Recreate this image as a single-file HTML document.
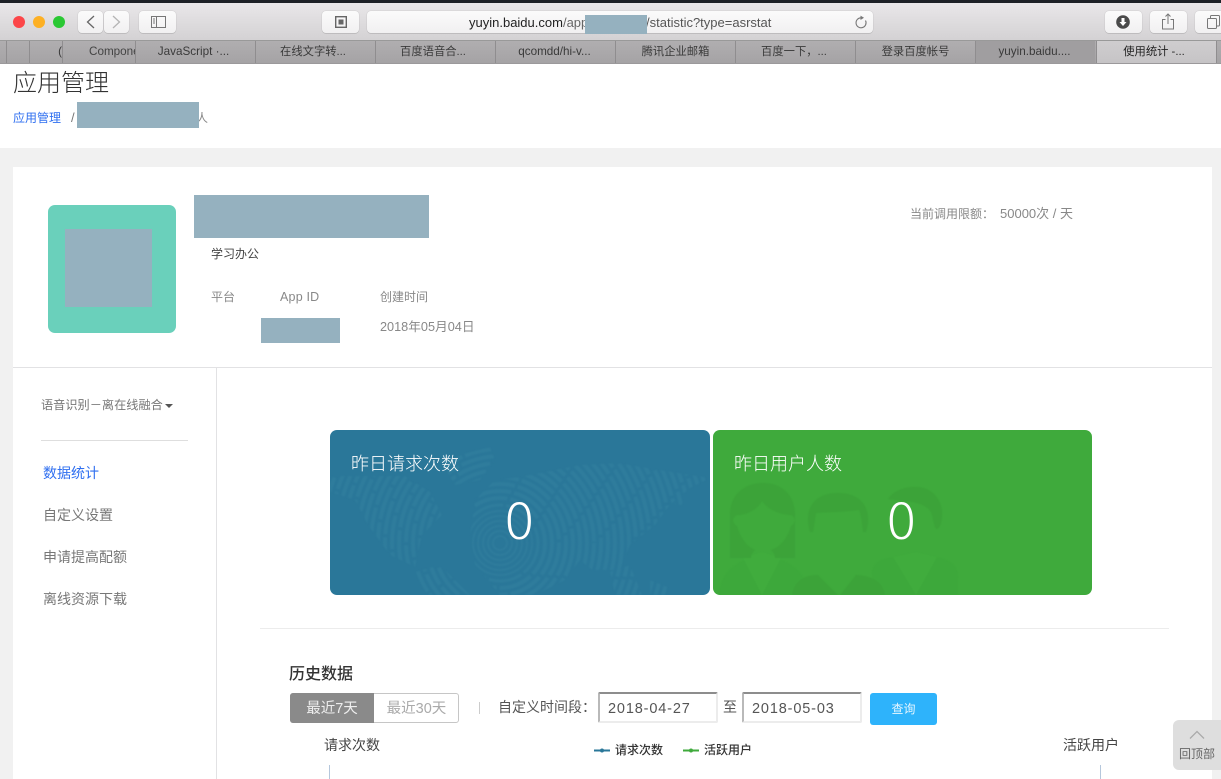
<!DOCTYPE html>
<html lang="zh">
<head>
<meta charset="utf-8">
<style>
html,body{margin:0;padding:0;background:#fff}
body{width:1221px;height:779px;overflow:hidden;position:relative;font-family:"Liberation Sans","Noto Sans CJK SC",sans-serif;color:#333}
.a{position:absolute;white-space:nowrap}
.cjk{font-family:"Noto Sans CJK SC","Liberation Sans",sans-serif}
.btn{position:absolute;top:11px;height:22px;background:linear-gradient(#fbfbfb,#f1f0f1);border-radius:4px;box-shadow:0 0 1px rgba(0,0,0,.28),0 1px 0 rgba(0,0,0,.08)}
.tab{position:absolute;top:41px;height:22px;width:120px;text-align:center;font-size:11.700px;line-height:22px;color:#3a3a3a;border-left:1px solid #8f8d8f;box-sizing:border-box;overflow:hidden;font-family:"Liberation Sans","Noto Sans CJK SC",sans-serif}
.tab.c{font-size:11.300px}
.red{position:absolute;background:#95b1bf}
.t{color:#888;font-size:12.500px}
svg{position:absolute;display:block}
</style>
</head>
<body>
<!-- browser chrome -->
<div class="a" style="left:0;top:0;width:1221px;height:3px;background:#1d2126"></div>
<div class="a" style="left:0;top:3px;width:1221px;height:38px;background:linear-gradient(#e9e7e9,#d3d1d3)"></div>
<div class="a" style="left:13px;top:16px;width:12px;height:12px;border-radius:50%;background:#fc4649"></div>
<div class="a" style="left:33px;top:16px;width:12px;height:12px;border-radius:50%;background:#fdb024"></div>
<div class="a" style="left:53px;top:16px;width:12px;height:12px;border-radius:50%;background:#2ac833"></div>
<div class="btn" style="left:78px;width:25px"></div>
<div class="btn" style="left:104px;width:25px"></div>
<svg style="left:78px;top:11px" width="51" height="22" fill="none" stroke-width="1.300"><path d="M16 5l-6.500 6 6.500 6" stroke="#666"/><path d="M35 5l6.500 6-6.500 6" stroke="#b4b4b4"/></svg>
<div class="btn" style="left:139px;width:37px"></div>
<svg style="left:151px;top:16px" width="15" height="12" fill="none" stroke="#777"><rect x=".5" y=".5" width="14" height="11"/><path d="M5.500 .5v11M2 3h2M2 5h2M2 7h2"/></svg>
<div class="btn" style="left:322px;width:37px"></div>
<svg style="left:335px;top:16px" width="12" height="12"><rect x=".7" y=".7" width="10.600" height="10.600" fill="none" stroke="#666" stroke-width="1.400"/><rect x="3.500" y="3.500" width="5" height="5" fill="#666"/></svg>
<div class="btn" style="left:367px;width:506px"></div>
<div class="a" style="left:469px;top:15px;font-size:13px;line-height:16px;color:#222">yuyin.baidu.com<span style="color:#666">/app</span></div>
<div class="a" style="left:646px;top:15px;font-size:13px;line-height:16px;color:#555">/statistic?type=asrstat</div>
<div class="red" style="left:585px;top:15px;width:62px;height:19px"></div>
<svg style="left:854px;top:15px" width="14" height="15" fill="none" stroke="#777" stroke-width="1.100"><path d="M7.500 2.800A5 5 0 1 0 11.500 5.500"/><path d="M6.500 .6l3.500 2.200-3.500 2.200z" fill="#777" stroke="none"/></svg>
<div class="btn" style="left:1105px;width:37px"></div>
<svg style="left:1116px;top:15px" width="14" height="14"><circle cx="7" cy="7" r="6.800" fill="#4a4a4a"/><path d="M5.500 3h3v4h2L7 11 3.500 7h2z" fill="#fff"/></svg>
<div class="btn" style="left:1150px;width:37px"></div>
<svg style="left:1161px;top:13px" width="14" height="17" fill="none" stroke="#777"><path d="M4.500 6.500H1.500v9.500h11V6.500H9.500M7 11V1M4.500 3.500L7 1l2.500 2.500"/></svg>
<div class="btn" style="left:1195px;width:37px"></div>
<svg style="left:1207px;top:15px" width="14" height="14" fill="none" stroke="#777"><rect x=".5" y="3.500" width="9" height="10" rx="1"/><path d="M3.500 3V1.500a1 1 0 0 1 1-1h7a1 1 0 0 1 1 1V10a1 1 0 0 1-1 1H10"/></svg>

<!-- tab bar -->
<div class="a" style="left:0;top:40px;width:1221px;height:24px;background:linear-gradient(#b0aeb0,#a5a3a5);border-top:1px solid #999;border-bottom:1px solid #9b999b;box-sizing:border-box"></div>
<div class="tab" style="left:6px;width:23px"></div>
<div class="tab" style="left:29px;width:33px;text-align:right">&nbsp;(</div>
<div class="tab" style="left:62px;width:73px;text-align:left;padding-left:26px;color:#444">Compone</div>
<div class="tab" style="left:135px;padding-right:4px">JavaScript ·...</div>
<div class="tab c" style="left:255px;padding-right:5px">在线文字转...</div>
<div class="tab c" style="left:375px;padding-right:5px">百度语音合...</div>
<div class="tab" style="left:495px;padding-right:2px">qcomdd/hi-v...</div>
<div class="tab c" style="left:615px">腾讯企业邮箱</div>
<div class="tab c" style="left:735px;padding-right:3px">百度一下，...</div>
<div class="tab c" style="left:855px">登录百度帐号</div>
<div class="tab" style="left:975px;background:#a09ea0;padding-right:2px">yuyin.baidu....</div>
<div class="tab c" style="left:1096px;background:linear-gradient(#cfcdcf,#c6c4c6);color:#222;padding-right:5px">使用统计 -...</div>
<div class="tab" style="left:1216px;width:5px"></div>

<!-- page head -->
<div class="a cjk" style="left:13px;top:63px;font-size:24px;line-height:35px;color:#333;font-weight:300">应用管理</div>
<div class="a cjk" style="left:13px;top:109px;font-size:12px;line-height:18px;color:#2f6ff0">应用管理</div>
<div class="a" style="left:71px;top:110px;font-size:13px;line-height:16px;color:#777">/</div>
<div class="a cjk" style="left:196px;top:109px;font-size:12px;line-height:18px;color:#888">人</div>
<div class="red" style="left:77px;top:102px;width:122px;height:26px"></div>

<!-- background + card -->
<div class="a" style="left:0;top:148px;width:1221px;height:631px;background:#f1f1f1"></div>
<div class="a" style="left:13px;top:167px;width:1199px;height:612px;background:#fff"></div>
<div class="a" style="left:13px;top:367px;width:1199px;height:1px;background:#e2e2e4"></div>
<div class="a" style="left:216px;top:368px;width:1px;height:411px;background:#e2e2e4"></div>

<!-- app info -->
<div class="a" style="left:48px;top:205px;width:128px;height:128px;border-radius:7px;background:#6ad0bb"></div>
<div class="red" style="left:65px;top:229px;width:87px;height:78px"></div>
<div class="red" style="left:194px;top:195px;width:235px;height:43px"></div>
<div class="a cjk" style="left:211px;top:245px;font-size:12px;line-height:18px;color:#444">学习办公</div>
<div class="a cjk t" style="left:211px;top:288px;font-size:12px;line-height:18px">平台</div>
<div class="a t" style="left:280px;top:288px;line-height:18px;letter-spacing:.2px">App ID</div>
<div class="a cjk t" style="left:380px;top:288px;font-size:12px;line-height:18px">创建时间</div>
<div class="red" style="left:261px;top:318px;width:79px;height:25px"></div>
<div class="a t" style="left:380px;top:318px;font-size:12.700px;line-height:18px;font-family:'Liberation Sans','Noto Sans CJK SC',sans-serif">2018年05月04日</div>
<div class="a t" style="left:910px;top:205px;font-size:12px;line-height:18px;font-family:'Liberation Sans','Noto Sans CJK SC',sans-serif">当前调用限额：</div>
<div class="a t" style="left:1000px;top:205px;font-size:13px;line-height:18px;font-family:'Liberation Sans','Noto Sans CJK SC',sans-serif">50000次 / 天</div>

<!-- sidebar -->
<div class="a cjk" style="left:41px;top:395px;font-size:12.200px;line-height:18px;color:#777">语音识别－离在线融合</div>
<div class="a" style="left:165px;top:404px;width:0;height:0;border-left:4px solid transparent;border-right:4px solid transparent;border-top:4px solid #555"></div>
<div class="a" style="left:41px;top:440px;width:147px;height:1px;background:#dedede"></div>
<div class="a cjk" style="left:43px;top:463px;font-size:14px;line-height:20px;color:#2f6ff0">数据统计</div>
<div class="a cjk" style="left:43px;top:505px;font-size:14px;line-height:20px;color:#777">自定义设置</div>
<div class="a cjk" style="left:43px;top:547px;font-size:14px;line-height:20px;color:#777">申请提高配额</div>
<div class="a cjk" style="left:43px;top:589px;font-size:14px;line-height:20px;color:#777">离线资源下载</div>

<!-- blue card -->
<div class="a" style="left:330px;top:430px;width:380px;height:165px;border-radius:7px;background:#2a7799;overflow:hidden">
<svg style="left:0;top:0;filter:blur(.7px)" width="380" height="165" fill="none" stroke="#2f7c9c" stroke-width="4">
<defs><clipPath id="m">
<path d="M0 46L75 46 100 62 112 85 92 105 85 137 60 125 38 95 25 70 0 62Z"/>
<path d="M110 30L160 17 165 30 150 50 125 55Z"/>
<path d="M85 142L110 135 140 165 95 165Z"/>
<path d="M165 50L190 47 250 35 287 33 330 40 380 48 360 58 340 75 325 95 300 115 290 140 262 140 250 130 235 150 205 165 170 165 145 135 140 105 145 70Z"/>
<path d="M280 142L300 135 312 165 285 165Z"/>
<path d="M320 150L340 158 335 165 320 165Z"/>
<path d="M345 62L354 60 352 75 345 75Z"/>
</clipPath></defs>
<g clip-path="url(#m)" stroke-dasharray="34 3">
<circle cx="170" cy="113" r="7" stroke-width="2" stroke-dasharray="none"/><circle cx="170" cy="113" r="12" stroke-width="2" stroke-dasharray="none"/><circle cx="170" cy="113" r="17" stroke-width="2" stroke-dasharray="none"/><circle cx="170" cy="113" r="22" stroke-width="2" stroke-dasharray="none"/><circle cx="170" cy="113" r="27" stroke-width="2" stroke-dasharray="none"/><circle cx="170" cy="113" r="32" stroke-width="2" stroke-dasharray="none"/><circle cx="170" cy="113" r="38" stroke-width="3"/><circle cx="170" cy="113" r="45"/><circle cx="170" cy="113" r="52"/><circle cx="170" cy="113" r="59"/><circle cx="170" cy="113" r="66"/><circle cx="170" cy="113" r="73"/><circle cx="170" cy="113" r="80"/><circle cx="170" cy="113" r="87"/><circle cx="170" cy="113" r="94"/><circle cx="170" cy="113" r="101"/><circle cx="170" cy="113" r="108"/><circle cx="170" cy="113" r="115"/><circle cx="170" cy="113" r="122"/><circle cx="170" cy="113" r="129"/><circle cx="170" cy="113" r="136"/><circle cx="170" cy="113" r="143"/><circle cx="170" cy="113" r="150"/><circle cx="170" cy="113" r="157"/><circle cx="170" cy="113" r="164"/><circle cx="170" cy="113" r="171"/><circle cx="170" cy="113" r="178"/><circle cx="170" cy="113" r="185"/><circle cx="170" cy="113" r="192"/><circle cx="170" cy="113" r="199"/><circle cx="170" cy="113" r="206"/><circle cx="170" cy="113" r="213"/>
</g></svg>
<div class="a cjk" style="left:21px;top:20px;font-size:18px;line-height:26px;color:#fff;font-weight:300">昨日请求次数</div>
<div class="a cjk" style="left:0;width:378px;text-align:center;top:55px;font-size:50px;line-height:66px;color:#fff;font-weight:300"><span style="display:inline-block;transform:scaleX(1.080)">0</span></div>
</div>

<!-- green card -->
<div class="a" style="left:713px;top:430px;width:379px;height:165px;border-radius:7px;background:#3faa3c;overflow:hidden">
<svg style="left:0;top:0;filter:blur(.6px)" width="379" height="165">
<g fill="#3da83b">
<path d="M6 165C8 145 18 134 38 128L49 125 62 128C84 134 94 148 96 165Z"/>
<path d="M159 165V145C159 132 170 127 186 127L203 124 222 127C238 129 245 136 245 148V165Z"/>
</g>
<g fill="#40ac3d">
<path d="M30 128L49 165 68 128 49 122Z"/>
<path d="M180 127L203 165 224 127 203 122Z"/>
</g>
<g fill="#3ca339">
<path d="M17 128V85C17 64 32 53 50 53S82 64 82 85V128H62C62 124 60 122 58 120 70 116 76 104 78 96 82 94 84 88 78 85 68 85 55 80 49 71 44 80 34 85 24 85 18 88 20 94 24 96 26 104 32 116 42 120 40 122 38 124 38 128Z"/>
<path d="M97 102C90 78 102 63 125 63S160 78 153 102H150C149 92 148 84 146 80 132 82 118 82 103 83 102 90 101 96 100 102Z"/>
<path d="M175 69C181 60 194 56 205 57 219 58 230 70 229 85 229 92 227 98 224 99 221 99 221 90 218 82 214 76 208 74 200 72 190 71 182 70 175 69Z"/>
<path d="M79 165C81 152 90 145 105 145L125 165ZM127 165L143 145C160 146 170 152 172 165Z"/>
</g>
</svg>
<div class="a cjk" style="left:21px;top:20px;font-size:18px;line-height:26px;color:#fff;font-weight:300">昨日用户人数</div>
<div class="a cjk" style="left:0;width:377px;text-align:center;top:55px;font-size:50px;line-height:66px;color:#fff;font-weight:300"><span style="display:inline-block;transform:scaleX(1.080)">0</span></div>
</div>

<div class="a" style="left:260px;top:628px;width:909px;height:1px;background:#ececec"></div>

<!-- history -->
<div class="a cjk" style="left:289px;top:661px;font-size:16px;line-height:23px;color:#333;font-weight:500">历史数据</div>
<div class="a" style="left:290px;top:693px;width:169px;height:30px;box-sizing:border-box;border:1px solid #c6c6c6;border-radius:3px"></div>
<div class="a" style="left:290px;top:693px;width:84px;height:30px;background:#8a8a8a;border-radius:3px 0 0 3px;color:#eee;font-size:14.500px;line-height:32px;text-align:center">最近7天</div>
<div class="a" style="left:374px;top:693px;width:85px;height:30px;color:#aaa;font-size:14.500px;line-height:32px;text-align:center">最近30天</div>
<div class="a" style="left:479px;top:702px;width:1px;height:12px;background:#ccc"></div>
<div class="a cjk" style="left:498px;top:697px;font-size:14px;line-height:21px;color:#555">自定义时间段：</div>
<div class="a" style="left:598px;top:692px;width:120px;height:31px;box-sizing:border-box;border:2px solid #ececec;border-top-color:#8d8d8d;border-left-color:#b9b9b9;border-radius:2px;font-size:14.500px;line-height:30px;padding-left:8px;letter-spacing:.85px;color:#555">2018-04-27</div>
<div class="a cjk" style="left:723px;top:697px;font-size:14px;line-height:21px;color:#555">至</div>
<div class="a" style="left:742px;top:692px;width:120px;height:31px;box-sizing:border-box;border:2px solid #ececec;border-top-color:#8d8d8d;border-left-color:#b9b9b9;border-radius:2px;font-size:14.500px;line-height:30px;padding-left:8px;letter-spacing:.85px;color:#555">2018-05-03</div>
<div class="a cjk" style="left:870px;top:693px;width:67px;height:32px;border-radius:3px;background:#2eb3fb;color:#e6f6ff;font-size:12px;line-height:31px;text-align:center">查询</div>

<div class="a cjk" style="left:324px;top:735px;font-size:14px;line-height:20px;color:#444">请求次数</div>
<div class="a cjk" style="left:1063px;top:735px;font-size:14px;line-height:20px;color:#444">活跃用户</div>
<svg style="left:594px;top:746px" width="16" height="9"><path d="M0 4.500h16" stroke="#2a7799" stroke-width="2"/><circle cx="8" cy="4.500" r="2" fill="#2a7799"/></svg>
<div class="a cjk" style="left:615px;top:741px;font-size:12px;line-height:18px;color:#333;font-weight:500">请求次数</div>
<svg style="left:683px;top:746px" width="16" height="9"><path d="M0 4.500h16" stroke="#3faa3c" stroke-width="2"/><circle cx="8" cy="4.500" r="2" fill="#3faa3c"/></svg>
<div class="a cjk" style="left:704px;top:741px;font-size:12px;line-height:18px;color:#333;font-weight:500">活跃用户</div>
<div class="a" style="left:329px;top:765px;width:1px;height:14px;background:#b5c7dc"></div>
<div class="a" style="left:1100px;top:765px;width:1px;height:14px;background:#b5c7dc"></div>

<!-- back to top -->
<div class="a" style="left:1173px;top:720px;width:48px;height:50px;border-radius:6px 0 0 6px;background:#dedede"></div>
<svg style="left:1189px;top:730px" width="16" height="10" fill="none" stroke="#aaa" stroke-width="1.300"><path d="M1 8.500L8 1.500l7 7"/></svg>
<div class="a cjk" style="left:1179px;top:745px;font-size:12px;line-height:17px;color:#666">回顶部</div>
</body>
</html>
